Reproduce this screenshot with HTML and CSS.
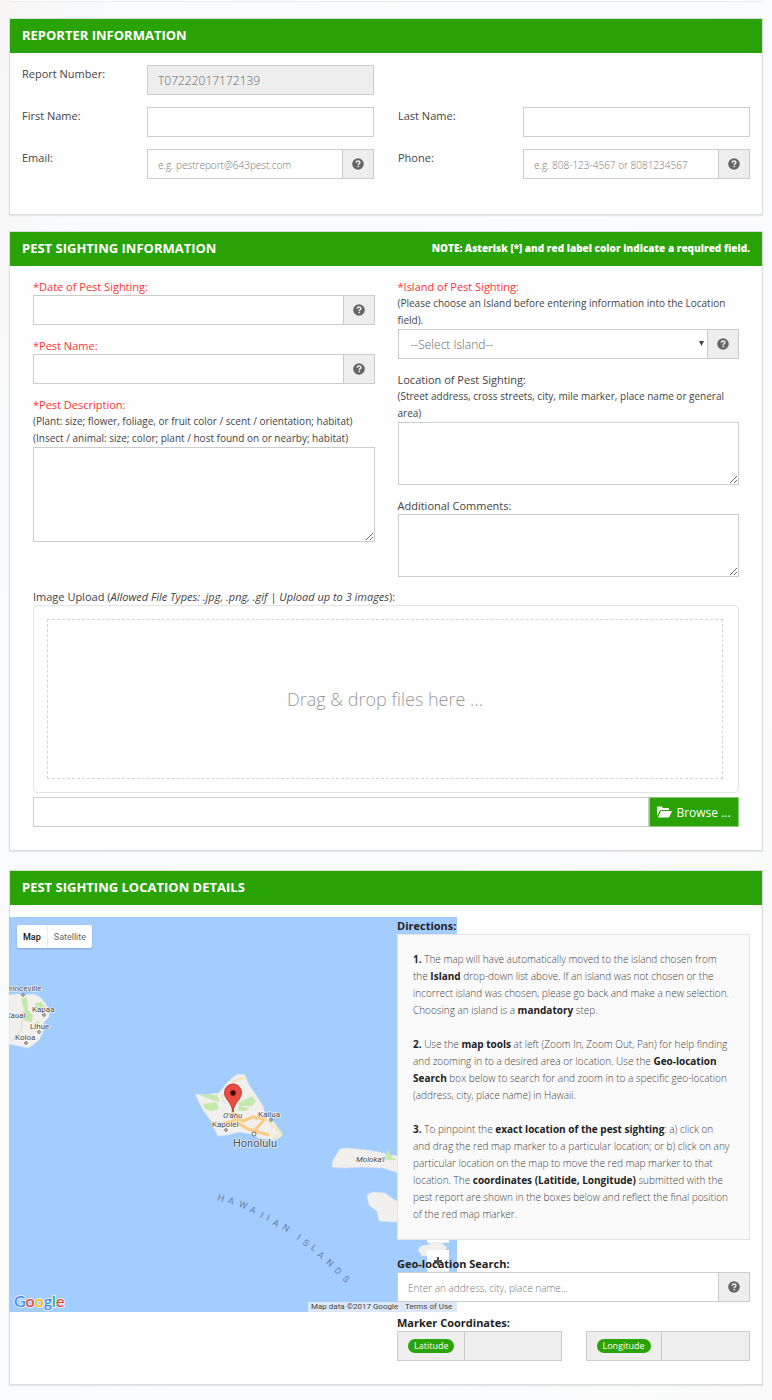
FILE: index.html
```html
<!DOCTYPE html>
<html lang="en">
<head>
<meta charset="utf-8">
<meta name="viewport" content="width=device-width, initial-scale=1">
<title>Pest Report</title>
<link rel="stylesheet" href="styles.css">
</head>
<body>
<svg class="symbols" aria-hidden="true">
  <symbol id="help" viewBox="0 0 12 12">
    <circle cx="6" cy="6" r="5.8" fill="#666"/>
    <path d="M4.2 4.7C4.3 3.5 5 3 6.1 3c1.1 0 1.8.6 1.8 1.5C7.9 5.700 6.300 5.700 6.300 7" fill="none" stroke="#eee" stroke-width="1.500"/>
    <rect x="5.500" y="7.700" width="1.600" height="1.500" fill="#eee"/>
  </symbol>
</svg>
<main class="page">
  <div class="previous"></div>

  <section class="panel">
    <header class="panel-head"><h2>REPORTER INFORMATION</h2></header>
    <form class="reporter">
      <div class="row first">
        <label for="number">Report Number:</label>
        <input class="box" id="number" value="T07222017172139" readonly>
      </div>
      <div class="row">
        <label for="first">First Name:</label>
        <input class="box" id="first">
      </div>
      <div class="row">
        <label for="last">Last Name:</label>
        <input class="box" id="last">
      </div>
      <div class="row">
        <label for="email">Email:</label>
        <div class="group"><input class="box" id="email" type="email" placeholder="e.g. pestreport@643pest.com"><button class="addon" type="button" aria-label="Email help"><svg class="help"><use href="#help"/></svg></button></div>
      </div>
      <div class="row">
        <label for="phone">Phone:</label>
        <div class="group"><input class="box" id="phone" type="tel" placeholder="e.g. 808-123-4567 or 8081234567"><button class="addon" type="button" aria-label="Phone help"><svg class="help"><use href="#help"/></svg></button></div>
      </div>
    </form>
  </section>

  <section class="panel">
    <header class="panel-head"><h2>PEST SIGHTING INFORMATION</h2><p class="note">NOTE: Asterisk [*] and red label color indicate a required field.</p></header>
    <form class="sighting">
      <div class="stack">
        <div class="field">
          <label class="required" for="date">*Date of Pest Sighting:</label>
          <div class="group"><input class="box" id="date"><button class="addon" type="button" aria-label="Date help"><svg class="help"><use href="#help"/></svg></button></div>
        </div>
        <div class="field">
          <label class="required" for="pest">*Pest Name:</label>
          <div class="group"><input class="box" id="pest"><button class="addon" type="button" aria-label="Pest name help"><svg class="help"><use href="#help"/></svg></button></div>
        </div>
        <div class="field">
          <label class="required" for="description">*Pest Description:</label>
          <p class="hint">(Plant: size; flower, foliage, or fruit color / scent / orientation; habitat)</p>
          <p class="hint">(Insect / animal: size; color; plant / host found on or nearby; habitat)</p>
          <textarea class="box tall" id="description"></textarea>
        </div>
      </div>
      <div class="stack">
        <div class="field">
          <label class="required" for="island">*Island of Pest Sighting:</label>
          <p class="hint">(Please choose an Island before entering information into the Location field).</p>
          <div class="group">
            <div class="select"><select class="box" id="island"><option>--Select Island--</option></select><svg class="arrow" viewBox="0 0 5 5"><path d="M0 0h5L2.500 5z" fill="#444"/></svg></div>
            <button class="addon" type="button" aria-label="Island help"><svg class="help"><use href="#help"/></svg></button>
          </div>
        </div>
        <div class="field">
          <label for="location">Location of Pest Sighting:</label>
          <p class="hint">(Street address, cross streets, city, mile marker, place name or general area)</p>
          <textarea class="box" id="location"></textarea>
        </div>
        <div class="field">
          <label for="comments">Additional Comments:</label>
          <textarea class="box" id="comments"></textarea>
        </div>
      </div>
      <div class="field upload">
        <label for="files">Image Upload (<em>Allowed File Types: .jpg, .png, .gif | Upload up to 3 images</em>):</label>
        <div class="preview"><div class="drop">Drag &amp; drop files here ...</div></div>
        <div class="group">
          <input class="box" id="files" readonly>
          <button class="browse" type="button"><svg class="folder" viewBox="0 0 15 12"><path d="M0 10V1.500Q0 .5 1 .5h3.500q1 0 1 1V2H11q1 0 1 1v1H4.500Q3.300 4 2.600 5z" fill="#fff"/><path d="M1 11.500 3.400 6q.4-1 1.500-1H15l-2.400 5.500q-.4 1-1.500 1z" fill="#fff"/></svg>Browse ...</button>
        </div>
      </div>
    </form>
  </section>

  <section class="panel">
    <header class="panel-head"><h2>PEST SIGHTING LOCATION DETAILS</h2></header>
    <div class="details">
      <div class="map">
        <svg class="chart" viewBox="0 0 448 395" preserveAspectRatio="xMinYMin slice" role="img" aria-label="Map of the Hawaiian Islands">
          <g fill="#f1f0ed" stroke="#dbe6f0" stroke-width=".6">
            <path d="M0 78 8 77 16 78 24 77 31 80 36 86 40 93 40 100 35 105 34 115 30 123 24 128 19 131 10 129 0 127z"/>
            <path d="M186 177 196 178 210 176 217 167 223 161 229 157 236 158 240 168 247 178 254 189 256 198 264 204 272 215 273 219 266 223 250 221 242 217 230 215 218 218 209 219 204 209 202 204 194 193z"/>
            <path d="M331 232 338 231 357 233 370 235 380 238 390 239 400 241 400 257 390 256 374 251 352 250 335 251 323 250 324 243z"/>
            <path d="M358 278 364 275 376 276 384 282 400 290 400 305 384 305 370 304 368 294 360 288z"/>
            <path d="M409 333 412 329 419 328 423 325 432 325 438 331 432 337 420 339 413 339z"/>
          </g>
          <g fill="#c5e8ad">
            <path d="M12 82 18 80 19 93 24 98 23 105 16 104 12 101 15 93zM26 86 32 85 37 91 27 93zM24 107 30 104 29 108z"/>
            <path d="M190 178 208 178 211 185 203 183 198 181zM194 187 207 185 210 192 202 194 196 192zM229 186 237 182 243 179 247 184 243 189 231 189zM230 189 240 191 237 194 229 194zM244 200 250 201 247 204zM376 240 379 232 382 239 387 243 378 243z"/>
          </g>
          <path d="M0 101h12M14 95 12 114 2 125M226 163 212 180 217 187" fill="none" stroke="#ddd6ca"/>
          <path d="M223 183 224 199 234 204 244 200 256 202 246 213M223 199 229 206 239 212 249 215 260 218M211 207 225 204" fill="none" stroke="#fbcb86" stroke-width="3"/>
          <path d="M214 180Q222 162 236 161M256 202 272 216 264 222" fill="none" stroke="#fae3b2" stroke-width="2"/>
          <g fill="#fff" stroke="#666"><circle cx="14" cy="78" r="1.300"/><circle cx="35" cy="98" r="1.300"/><circle cx="30" cy="115" r="1.300"/><circle cx="17" cy="126" r="1.300"/><circle cx="217" cy="213" r="1.300"/><circle cx="262" cy="203" r="1.300"/><circle cx="245" cy="217" r="2"/></g>
          <g class="places">
            <text x="-4" y="74">Princeville</text><text x="23" y="95">Kapaa</text><text class="italic" x="-3" y="101">Kauai</text><text x="21" y="112">Lihue</text><text x="6" y="123">Koloa</text>
            <text class="italic" x="214" y="201">O'ahu</text><text x="249" y="200">Kailua</text><text x="203" y="210">Kapolei</text><text class="city" x="224" y="230">Honolulu</text><text class="italic" x="347" y="245">Moloka'i</text>
          </g>
          <g class="chain">
            <text transform="translate(212 281) rotate(17)">H</text><text transform="translate(222 284) rotate(20)">A</text><text transform="translate(234 288) rotate(23)">W</text><text transform="translate(244 293) rotate(24)">A</text><text transform="translate(253 298) rotate(26)">I</text><text transform="translate(259 301) rotate(28)">I</text><text transform="translate(267 306) rotate(30)">A</text><text transform="translate(277 311) rotate(32)">N</text>
            <text transform="translate(290 320) rotate(35)">I</text><text transform="translate(297 326) rotate(36)">S</text><text transform="translate(305 331) rotate(38)">L</text><text transform="translate(312 338) rotate(40)">A</text><text transform="translate(321 346) rotate(42)">N</text><text transform="translate(329 354) rotate(44)">D</text><text transform="translate(337 362) rotate(46)">S</text>
          </g>
          <path d="M224 195C223 185 215.500 183 215.500 175.500a8.500 8.500 0 0 1 17 0C232.500 183 225 185 224 195z" fill="#ea4c42" stroke="#a92f26" stroke-width=".8"/>
          <circle cx="224" cy="176" r="2.700" fill="#3c0b09"/>
          <rect x="299" y="385" width="149" height="10" fill="#dce8f7"/>
          <g class="legal"><text x="302" y="392">Map data ©2017 Google</text><text x="396" y="392">Terms of Use</text></g>
          <text class="logo" x="5" y="390"><tspan fill="#4285f4">G</tspan><tspan fill="#ea4335">o</tspan><tspan fill="#fbbc05">o</tspan><tspan fill="#4285f4">g</tspan><tspan fill="#34a853">l</tspan><tspan fill="#ea4335">e</tspan></text>
        </svg>
        <div class="types"><button class="current" type="button">Map</button><button type="button">Satellite</button></div>
        <div class="tools"><button type="button" aria-label="Street view"></button><button type="button" aria-label="Zoom in"><svg class="plus" viewBox="0 0 8 8"><path d="M4 0v8M0 4h8" stroke="#555" stroke-width="2"/></svg></button><button type="button" aria-label="Zoom out"></button></div>
      </div>
      <div class="side">
        <h3>Directions:</h3>
        <div class="directions">
          <p><b>1.</b> The map will have automatically moved to the island chosen from the <b>Island</b> drop-down list above. If an island was not chosen or the incorrect island was chosen, please go back and make a new selection. Choosing an island is a <b>mandatory</b> step.</p>
          <p><b>2.</b> Use the <b>map tools</b> at left (Zoom In, Zoom Out, Pan) for help finding and zooming in to a desired area or location. Use the <b>Geo-location Search</b> box below to search for and zoom in to a specific geo-location (address, city, place name) in Hawaii.</p>
          <p><b>3.</b> To pinpoint the <b>exact location of the pest sighting</b>: a) click on and drag the red map marker to a particular location; or b) click on any particular location on the map to move the red map marker to that location. The <b>coordinates (Latitide, Longitude)</b> submitted with the pest report are shown in the boxes below and reflect the final position of the red map marker.</p>
        </div>
        <div class="field search">
          <label class="strong" for="geo">Geo-location Search:</label>
          <div class="group"><input class="box" id="geo" placeholder="Enter an address, city, place name..."><button class="addon" type="button" aria-label="Search help"><svg class="help"><use href="#help"/></svg></button></div>
        </div>
        <h3>Marker Coordinates:</h3>
        <div class="coordinates">
          <div class="group"><label class="tag" for="lat"><span class="pill">Latitude</span></label><input class="box" id="lat" readonly></div>
          <div class="group"><label class="tag" for="lng"><span class="pill">Longitude</span></label><input class="box" id="lng" readonly></div>
        </div>
      </div>
    </div>
  </section>
</main>
</body>
</html>
```
FILE: styles.css
```css
* { box-sizing: border-box; }

body {
  margin: 0;
  background: linear-gradient(100deg, #f8f7f6 0, #f9fbfd 12%, #fbfcfe 60%, #fafafa 100%);
  color: #444;
  font: 11px/17px "Open Sans", sans-serif;
}

h2, h3, p { margin: 0; }
input, select, textarea, button { font: inherit; color: inherit; }
.symbols { position: absolute; width: 0; height: 0; }

.page {
  display: flex;
  flex-direction: column;
  gap: 16px;
  padding: 0 9px 15px;
}

.previous {
  height: 2px;
  border: 1px solid #e9ebec;
  border-top: 0;
  background: #fff;
}

.panel {
  border: 1px solid #d9dcdc;
  background: #fefefe;
  box-shadow: 0 1px 1px #e8e8e8;
}

.panel + .panel + .panel { margin-top: 3px; }

.panel-head {
  display: flex;
  align-items: center;
  justify-content: space-between;
  min-height: 34px;
  padding: 0 12px 1px;
  background: #29a307;
  color: #fff;
}

.panel-head h2 { font-size: 13px; font-weight: 700; }
.note { font-size: 10px; font-weight: 800; }

.reporter {
  display: grid;
  grid-template-columns: 1fr 1fr;
  gap: 12px 24px;
  padding: 12px 12px 35px;
}

.row { display: grid; grid-template-columns: 125px 1fr; }
.first { grid-column: 1; }
.first + .row { grid-column: 1; }

.group { display: flex; }

.box {
  display: block;
  width: 100%;
  min-width: 0;
  height: 30px;
  margin: 0;
  padding: 0 10px;
  border: 1px solid #ccc;
  border-radius: 0;
  outline: 0;
  background: #fff;
  color: #666;
  font-size: 12px;
  font-weight: 300;
}

.box[readonly] { background: #eee; }
.box::placeholder { color: #777; font-size: 10px; opacity: 1; }
textarea.box { height: 63px; }
textarea.tall { height: 95px; }

.addon {
  display: flex;
  flex: none;
  align-items: center;
  justify-content: center;
  width: 31px;
  height: 30px;
  padding: 0;
  border: 1px solid #ccc;
  border-left: 0;
  background: #eee;
}

.help { width: 12px; height: 12px; }

.sighting {
  display: grid;
  grid-template-columns: 1fr 1fr;
  gap: 11px 23px;
  padding: 12px 23px 23px;
}

.stack { display: flex; flex-direction: column; gap: 12px; }
.field label { display: block; }
.field .required { color: #f33; }
.hint { font-size: 10px; }

.select { position: relative; flex: 1; }
.select select { appearance: none; padding-left: 12px; }
.arrow { position: absolute; top: 12px; right: 4px; width: 5px; height: 5px; pointer-events: none; }

.upload { grid-column: 1 / -1; }
.upload .box { background: #fff; }

.preview {
  margin-bottom: 4px;
  padding: 13px 15px 13px 13px;
  border: 1px solid #e4e4e4;
  border-radius: 4px;
}

.drop {
  display: flex;
  align-items: center;
  justify-content: center;
  height: 160px;
  border: 1px dashed #d4d4d4;
  color: #999;
  font-size: 18px;
  font-weight: 300;
}

.browse {
  display: flex;
  flex: none;
  align-items: center;
  justify-content: center;
  gap: 4px;
  width: 90px;
  height: 30px;
  padding: 0;
  border: 1px solid #8fc981;
  background: #29a307;
  color: #fff;
  font-size: 12px;
}

.folder { width: 15px; height: 12px; }

.details {
  display: grid;
  grid-template-columns: 387fr 60fr 293fr;
  padding: 12px 12px 23px 0;
}

.map {
  position: relative;
  grid-area: 1 / 1 / 2 / 3;
  align-self: start;
  height: 395px;
  margin-left: -1px;
  overflow: hidden;
  background: #a3ccff;
}

.chart { display: block; width: 100%; height: 100%; }
.chart text { font-family: Roboto, sans-serif; }
.places { fill: #444; font-size: 8px; stroke: #fff; stroke-width: 1px; paint-order: stroke; }
.places .city { font-size: 11px; }
.places .italic { font-style: italic; }
.chain { fill: #64809f; font-size: 9px; text-anchor: middle; dominant-baseline: central; }
.legal { fill: #444; font-size: 8px; }
.chart .logo { font-family: Lato, sans-serif; font-size: 16px; font-weight: 500; stroke: #e4effc; stroke-width: 2px; paint-order: stroke; }

.types {
  position: absolute;
  top: 8px;
  left: 8px;
  display: flex;
  border-radius: 2px;
  background: #fff;
  box-shadow: 0 1px 2px #0003;
}

.types button {
  height: 23px;
  padding: 0 6px;
  border: 0;
  background: none;
  color: #666;
  font: 9px/12px Roboto, sans-serif;
}

.types .current { border-right: 1px solid #eee; color: #111; font-weight: 500; }

.tools { position: absolute; top: 304px; right: 8px; display: grid; }
.tools button { width: 22px; height: 22px; padding: 0; border: 0; border-bottom: 1px solid #eee; background: #fff; }
.tools button:first-child { margin-bottom: 7px; }
.plus { display: block; width: 8px; height: 8px; margin: 0 auto; }

.side {
  z-index: 1;
  grid-area: 1 / 2 / 2 / 4;
}

.side h3, .strong { color: #222; font-size: 11px; font-weight: 700; line-height: 17px; }

.directions {
  display: grid;
  gap: 17px;
  padding: 16px 17px 16px 15px;
  border: 1px solid #e4e4e4;
  background: #fafafa;
  font-size: 10px;
  font-weight: 300;
}

.directions b { color: #222; font-weight: 700; }
.search { padding: 15px 0 12px; }
.coordinates { display: grid; grid-template-columns: 1fr 1fr; gap: 24px; }

.tag {
  display: flex;
  align-items: center;
  padding: 0 10px;
  border: 1px solid #ccc;
  border-right: 0;
  background: #eee;
}

.pill {
  padding: 0 6px;
  border-radius: 7px;
  background: #29a307;
  color: #fff;
  font-size: 9px;
  line-height: 14px;
}
```
